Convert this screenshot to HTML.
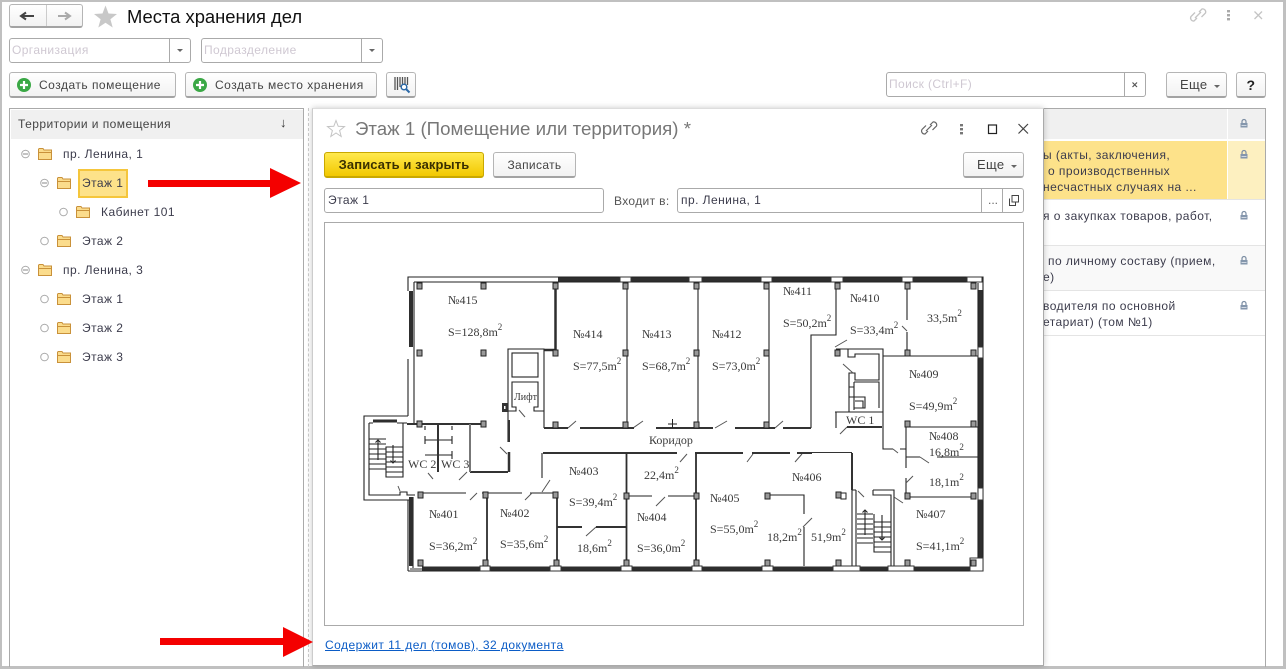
<!DOCTYPE html>
<html><head><meta charset="utf-8"><style>
html,body{margin:0;padding:0;background:#fff}
body{width:1286px;height:669px;position:relative;overflow:hidden;font:12px "Liberation Sans",Arial,sans-serif;color:#333}
.a{position:absolute;box-sizing:border-box}
.t{position:absolute;white-space:nowrap;line-height:16px}
.btn{position:absolute;box-sizing:border-box;background:linear-gradient(#fff,#f2f2f2);border:1px solid #b5b5b5;border-bottom:2px solid #a3a3a3;border-radius:3px;text-align:center;line-height:24px;color:#444;font-size:12px;letter-spacing:.35px}
.btn.w{letter-spacing:.5px}
.btn.m{font-size:13px;letter-spacing:.3px}
.fld{position:absolute;box-sizing:border-box;background:#fff;border:1px solid #aaa;border-radius:3px}
.v{position:absolute;top:0;bottom:0;width:1px;background:#aaa}
.ph{position:absolute;color:#cfc8d2;font-size:12px;line-height:22px;left:2px;letter-spacing:.4px}
.tri{position:absolute;width:0;height:0;border-left:3px solid transparent;border-right:3px solid transparent;border-top:3px solid #666}
.row{letter-spacing:.45px;color:#3c3c4c}
svg{position:absolute;left:0;top:0}
</style></head><body>
<!-- page frame -->
<div class="a" style="left:0;top:0;width:1286px;height:669px;border:solid #c0c0c0;border-width:2px 3px 3px 2px"></div>

<!-- nav buttons -->
<div class="btn" style="left:9px;top:4px;width:74px;height:24px"></div>
<div class="a" style="left:46px;top:5px;width:1px;height:21px;background:#ccc"></div>

<div class="t" style="left:127px;top:7px;font-size:18.4px;line-height:20px;color:#111">Места хранения дел</div>

<div class="fld" style="left:9px;top:38px;width:182px;height:25px"><div class="ph">Организация</div><div class="v" style="left:159px"></div><div class="tri" style="left:167px;top:10px"></div></div>
<div class="fld" style="left:201px;top:38px;width:182px;height:25px"><div class="ph">Подразделение</div><div class="v" style="left:159px"></div><div class="tri" style="left:167px;top:10px"></div></div>

<div class="btn w" style="left:9px;top:72px;width:167px;height:26px;text-align:left;padding-left:29px">Создать помещение</div>
<div class="btn w" style="left:185px;top:72px;width:192px;height:26px;text-align:left;padding-left:29px">Создать место хранения</div>
<div class="btn" style="left:386px;top:72px;width:30px;height:26px"></div>

<div class="fld" style="left:886px;top:72px;width:260px;height:25px"><div class="ph">Поиск (Ctrl+F)</div><div class="v" style="left:237px"></div></div>
<div class="btn m" style="left:1166px;top:72px;width:61px;height:26px;text-align:left;padding-left:13px">Еще</div><div class="tri" style="left:1214px;top:85px"></div>
<div class="btn" style="left:1236px;top:72px;width:30px;height:26px;font-weight:bold;font-size:14px;color:#222">?</div>

<!-- left panel -->
<div class="a" style="left:9px;top:108px;width:295px;height:559px;border:1px solid #aaa;border-bottom:0"></div>
<div class="a" style="left:11px;top:110px;width:292px;height:29px;background:#f0f0f0"></div>
<div class="t row" style="left:18px;top:116px;color:#444">Территории и помещения</div>
<div class="t" style="left:280px;top:115px;font-size:13px;color:#333">↓</div>

<div class="a" style="left:78px;top:169px;width:50px;height:29px;background:#fde28a;border:2px solid #f5c63c"></div>
<div class="t row" style="left:63px;top:146px">пр. Ленина, 1</div>
<div class="t row" style="left:82px;top:175px">Этаж 1</div>
<div class="t row" style="left:101px;top:204px">Кабинет 101</div>
<div class="t row" style="left:82px;top:233px">Этаж 2</div>
<div class="t row" style="left:63px;top:262px">пр. Ленина, 3</div>
<div class="t row" style="left:82px;top:291px">Этаж 1</div>
<div class="t row" style="left:82px;top:320px">Этаж 2</div>
<div class="t row" style="left:82px;top:349px">Этаж 3</div>

<!-- separator -->
<div class="a" style="left:308px;top:108px;width:0;height:559px;border-left:1px dashed #ccc"></div>

<!-- right table -->
<div class="a" style="left:1030px;top:108px;width:236px;height:559px;border:1px solid #aaa;border-left:0;border-bottom:0"></div>
<div class="a" style="left:1030px;top:109px;width:197px;height:30px;background:#f0f0f0"></div>
<div class="a" style="left:1228px;top:109px;width:37px;height:30px;background:#f0f0f0"></div>
<div class="a" style="left:1030px;top:141px;width:197px;height:58px;background:#fde28a"></div>
<div class="a" style="left:1228px;top:141px;width:37px;height:58px;background:#fdf0c0"></div>
<div class="a" style="left:1030px;top:245px;width:235px;height:1px;background:#e4e4e4"></div>
<div class="a" style="left:1030px;top:246px;width:235px;height:44px;background:#f9f9f9"></div>
<div class="a" style="left:1030px;top:290px;width:235px;height:1px;background:#e4e4e4"></div>
<div class="a" style="left:1030px;top:335px;width:235px;height:1px;background:#e4e4e4"></div>
<div class="a" style="left:1030px;top:199px;width:235px;height:1px;background:#e4e4e4"></div>
<div class="t row" style="left:1043px;top:147px">ы (акты, заключения,</div>
<div class="t row" style="left:1048px;top:163px">о производственных</div>
<div class="t row" style="left:1043px;top:179px">несчастных случаях на ...</div>
<div class="t row" style="left:1043px;top:208px">я о закупках товаров, работ,</div>
<div class="t row" style="left:1048px;top:253px">по личному составу (прием,</div>
<div class="t row" style="left:1043px;top:269px">е)</div>
<div class="t row" style="left:1043px;top:298px">водителя по основной</div>
<div class="t row" style="left:1043px;top:314px">етариат) (том №1)</div>

<!-- dialog -->
<div class="a" style="left:312px;top:108px;width:732px;height:558px;background:#fff;border:1px solid #aaa;border-top-color:#ddd;border-left-color:#ccc;box-shadow:0 0 6px rgba(0,0,0,.22)"></div>
<div class="t" style="left:355px;top:118px;font-size:18.7px;line-height:22px;color:#777">Этаж 1 (Помещение или территория) *</div>
<div class="btn" style="left:324px;top:152px;width:160px;height:26px;background:linear-gradient(#ffe94d,#f2c800);border-color:#c9a800;color:#3a3000;font-weight:bold;font-size:13px;letter-spacing:.1px">Записать и закрыть</div>
<div class="btn" style="left:493px;top:152px;width:83px;height:26px">Записать</div>
<div class="btn m" style="left:963px;top:152px;width:61px;height:26px;text-align:left;padding-left:13px">Еще</div><div class="tri" style="left:1011px;top:165px"></div>
<div class="fld" style="left:324px;top:188px;width:280px;height:25px"><div class="t row" style="left:3px;top:3px">Этаж 1</div></div>
<div class="t" style="left:614px;top:193px;color:#555;letter-spacing:.35px">Входит в:</div>
<div class="fld" style="left:677px;top:188px;width:347px;height:25px"><div class="t row" style="left:3px;top:3px">пр. Ленина, 1</div><div class="v" style="left:303px"></div><div class="v" style="left:324px"></div><div class="t" style="left:310px;top:3px;color:#666">...</div></div>
<div class="a" style="left:324px;top:222px;width:700px;height:404px;border:1px solid #aaa"></div>
<div class="t" style="left:325px;top:637px;color:#0b5cc6;text-decoration:underline;letter-spacing:.46px">Содержит 11 дел (томов), 32 документа</div>

<svg width="1286" height="669" viewBox="0 0 1286 669" xmlns="http://www.w3.org/2000/svg">
<defs>
<symbol id="fo" viewBox="0 0 14 12" overflow="visible"><path d="M.5 2.5V1.2L1.2.5H5L6 2H13.5V11.5H.5Z" fill="#fbdc8c" stroke="#c9913a"/><path d="M.5 4.5H13.5" stroke="#c9913a"/></symbol>
<symbol id="lk" overflow="visible"><path d="M2 4V2.5A2 2 0 0 1 6 2.5V4" fill="none" stroke="#7a8ca2" stroke-width="1.2"/><rect x=".5" y="4" width="7" height="4.500" fill="#8496ac"/><rect x="1.500" y="6" width="5" height="1" fill="#d0d8e2"/></symbol>
</defs>

<!-- nav arrows -->
<path d="M21 16H34M26 12.500L21 16L26 19.500" fill="none" stroke="#444" stroke-width="2"/>
<path d="M58 16H70M65 12.500L70 16L65 19.500" fill="none" stroke="#aaa" stroke-width="2"/>
<!-- big star -->
<path d="M105.500 5.500L108.500 13.500L117 14L110.400 19.300L112.700 27.500L105.500 22.800L98.300 27.500L100.600 19.300L94 14L102.500 13.500Z" fill="#c8c8c8"/>
<!-- plus icons -->
<circle cx="24" cy="85" r="7" fill="#3aa845"/><path d="M24 81V89M20 85H28" stroke="#fff" stroke-width="2.200"/>
<circle cx="200" cy="85" r="7" fill="#3aa845"/><path d="M200 81V89M196 85H204" stroke="#fff" stroke-width="2.200"/>
<!-- barcode -->
<path d="M395 77V90M397.500 77V90M400 77V87M402.500 77V85M405 77V85M407.500 77V85" stroke="#555" stroke-width="1.300"/>
<circle cx="404" cy="87" r="2.800" fill="#fff" stroke="#2d6aa8" stroke-width="1.500"/><path d="M406 89L409.500 92.500" stroke="#2d6aa8" stroke-width="2"/>
<!-- clear x in search -->
<path d="M1132.500 82.500L1137 87M1137 82.500L1132.500 87" stroke="#555" stroke-width="1.200"/>
<!-- top right icons -->
<g fill="none" stroke="#c4c4c4" stroke-width="1.300"><path d="M1199 12L1202 9A3 3 0 0 1 1205.500 13L1201.500 17M1197 18L1194 21A3 3 0 0 1 1191 16.500L1195 12.500"/><path d="M1195 18L1201 12"/><path d="M1254.500 11.500L1262 19M1262 11.500L1254.500 19"/></g>
<g fill="#aaa"><rect x="1227" y="10" width="3" height="2.400"/><rect x="1227" y="14" width="3" height="2.400"/><rect x="1227" y="18" width="3" height="2.400"/></g>
<!-- tree nodes -->
<g fill="#fff" stroke="#aaa">
<circle cx="25.500" cy="154" r="3.800"/><circle cx="44.500" cy="183" r="3.800"/><circle cx="63.500" cy="212" r="3.800"/><circle cx="44.500" cy="241" r="3.800"/><circle cx="25.500" cy="270" r="3.800"/><circle cx="44.500" cy="299" r="3.800"/><circle cx="44.500" cy="328" r="3.800"/><circle cx="44.500" cy="357" r="3.800"/>
</g>
<path d="M23 154H28M42 183H47M23 270H28" stroke="#888"/>
<use href="#fo" x="38" y="148" width="14" height="12"/><use href="#fo" x="57" y="177" width="14" height="12"/><use href="#fo" x="76" y="206" width="14" height="12"/><use href="#fo" x="57" y="235" width="14" height="12"/><use href="#fo" x="38" y="264" width="14" height="12"/><use href="#fo" x="57" y="293" width="14" height="12"/><use href="#fo" x="57" y="322" width="14" height="12"/><use href="#fo" x="57" y="351" width="14" height="12"/>
<!-- locks -->
<use href="#lk" x="1240" y="119"/><use href="#lk" x="1240" y="150"/><use href="#lk" x="1240" y="211"/><use href="#lk" x="1240" y="256"/><use href="#lk" x="1240" y="301"/>
<!-- dialog icons -->
<path d="M336 120.500L338.200 126.300L344.500 126.600L339.600 130.500L341.200 136.500L336 133L330.800 136.500L332.400 130.500L327.500 126.600L333.800 126.300Z" fill="#fff" stroke="#c4c4c4"/>
<g fill="none" stroke="#666" stroke-width="1.200"><path d="M930 125L933 122A3 3 0 0 1 936.500 126L932.500 130M928 131L925 134A3 3 0 0 1 922 129.500L926 125.500"/><path d="M926 131L932 125"/></g>
<g fill="#777"><rect x="960" y="124" width="3" height="2.400"/><rect x="960" y="128" width="3" height="2.400"/><rect x="960" y="132" width="3" height="2.400"/></g>
<rect x="988.500" y="125" width="8" height="8.500" fill="none" stroke="#222" stroke-width="1.200"/>
<path d="M1018.500 124L1028 133.500M1028 124L1018.500 133.500" stroke="#444" stroke-width="1.200"/>
<path d="M1012 195.500H1018.500V202H1012ZM1009.500 198.500V205.500H1015.500V202" fill="none" stroke="#444"/>

<!-- FLOOR PLAN -->
<g fill="none" stroke="#222" stroke-width="1.100">
<!-- outer walls -->
<path d="M408 291V277H983V291"/>
<path d="M414 282H978"/>
<path d="M414 282V424M408 359V416"/>
<path d="M978 283V566M983 291V558"/>
<path d="M408 571H983V558"/>
<path d="M408 500V571M413 497V571"/>
<!-- partitions -->
<path d="M627 282V428M698 282V428M769 282V428M836 282V335H811V428M907 282V320M907 332V356M883 356H978"/>
<!-- left stair box -->
<path d="M408 416H364V500H413M369 423V495H400V492H407V495H415M369 423H373M397 423H407"/>
<path d="M403 423V477H386V447H403M369 439H386M369 444H386M369 449H386M369 454H386M369 459H386M369 464H386M369 469H386M386 452H403M386 457H403M386 462H403M386 467H403M386 472H403"/>
<!-- lift -->
<path d="M508 442V349H544V428"/>
<rect x="512" y="353" width="26" height="24"/>
<path d="M508 411H516V407H512V382H538V407H534V411H544"/>
<!-- right core -->
<path d="M836 349H883V449H893M848 349V357H855V354H879V380H855V373H849V412M854 382H879V408M854 382V410M849 387H854M849 397H854M854 397H865V408H854M855 401H863V408M835 412H883M836 412V428"/>
<path d="M906 427V468M906 478V498M906 427H978M906 457H920M937 457H978M906 497H975M900 449H906"/>
<!-- WC -->
<path d="M425 440H452M425 436V444M452 436V444M425 455H452M452 451V459M425 426V430M452 426V430"/>
<path d="M420 493H466M482 493H522M530 493H555"/>
<path d="M542 453V478"/>
<path d="M626 496H652M668 496H695"/>
<path d="M766 495H804V514M804 527V566"/>
<!-- stair right -->
<path d="M852 490V566M856 490V566M852 490H856M873 490H894V566M873 490V495H891V566"/>
<path d="M857 514H873M857 519H873M857 524H873M857 529H873M857 534H873M857 538H873M857 543H873M874 514V552H891M874 522H891M874 527H891M874 532H891M874 537H891M874 542H891M874 547H891"/>
<path d="M378 440V460M375.500 442.500L378 440L380.500 442.500M393 445V463M390.500 460.500L393 463L395.500 460.500M865 510V535M862.500 512.500L865 510L867.500 512.500M882 515V540M879.500 537.500L882 540L884.500 537.500"/>
</g>
<g stroke="#555" stroke-width="1" fill="none">
<!-- door swings -->
<path d="M428 473L433 479M459 480L467 472M470 500L477 493M525 500L532 493M542 492L550 480M500 447L507 454M586 536L596 527M656 506L665 497M568 428L576 421M633 428L643 421M715 428L727 421M775 428L783 421M680 462L687 454M747 462L753 454M795 462L802 454M803 527L812 518M893 449L898 453M920 457L929 463M906 483L913 476M858 491L864 497M894 497L903 503M840 434L847 427M835 347L847 340M843 364L853 373M902 326L907 331M400 491L398 486M519 410L525 417"/>
</g>
<g stroke="#333" fill="none" stroke-width="2">
<path d="M544 428H568M580 428H634M656 428H713M735 428H775M783 428H811"/>
<path d="M543 453H677M695 453H743M752 453H790M797 453H812M852 453V490"/>
<path d="M509 420V442"/>
<path d="M509 452V472" stroke-width="2.500"/>
<path d="M407 424H484"/>
<path d="M557 527H582M596 527H626"/>
<path d="M847 427H882"/>
<path d="M470 472H508"/>
<path d="M438 424V472"/>
<path d="M470 424V472" stroke="#777"/>
</g>
<path d="M812 452.500H852" stroke="#333" fill="none" stroke-width="1"/>
<g stroke="#2e2e2e" fill="none">
<path d="M558 279.500H967" stroke-width="4"/>
<path d="M411 291V347" stroke-width="4"/>
<path d="M373 421H397" stroke-width="3"/>
<path d="M980.500 290V488M980.500 500V558" stroke-width="4"/>
<path d="M422 568.500H970" stroke-width="4"/>
<path d="M411 497V566" stroke-width="4"/>
<path d="M555.500 282V350M544 350H556" stroke-width="2.500"/>
<path d="M626.500 453V566M696 453V566M487 493V566M557 493V566" stroke-width="1.800"/>
</g>
<path d="M410 569.500H422" stroke="#999" stroke-width="3"/>
<!-- window gaps -->
<g fill="#fff" stroke="#333" stroke-width="1">
<rect x="620" y="277" width="11" height="5"/><rect x="689" y="277" width="13" height="5"/><rect x="761" y="277" width="11" height="5"/><rect x="831" y="277" width="12" height="5"/><rect x="902" y="277" width="11" height="5"/><rect x="967" y="277" width="15" height="5"/>
<rect x="978" y="347" width="5" height="11"/><rect x="978" y="488" width="5" height="12"/>
<rect x="480" y="566" width="10" height="5"/><rect x="550" y="566" width="11" height="5"/><rect x="621" y="566" width="11" height="5"/><rect x="692" y="566" width="10" height="5"/><rect x="762" y="566" width="11" height="5"/><rect x="833" y="566" width="27" height="5"/><rect x="888" y="566" width="26" height="5"/><rect x="970" y="558" width="13" height="13"/>
</g>
<!-- columns -->
<g fill="#999" stroke="#222" stroke-width="1">
<rect x="417" y="283" width="5" height="6"/><rect x="481" y="283" width="5" height="6"/><rect x="553" y="283" width="5" height="6"/><rect x="623" y="283" width="5" height="6"/><rect x="694" y="283" width="5" height="6"/><rect x="764" y="283" width="5" height="6"/><rect x="835" y="283" width="5" height="6"/><rect x="905" y="283" width="5" height="6"/><rect x="971" y="283" width="5" height="6"/>
<rect x="417" y="350" width="5" height="6"/><rect x="481" y="350" width="5" height="6"/><rect x="553" y="350" width="5" height="6"/><rect x="623" y="350" width="5" height="6"/><rect x="694" y="350" width="5" height="6"/><rect x="764" y="350" width="5" height="6"/><rect x="835" y="350" width="5" height="6"/><rect x="905" y="350" width="5" height="6"/><rect x="971" y="350" width="5" height="6"/>
<rect x="417" y="421" width="5" height="6"/><rect x="481" y="421" width="5" height="6"/><rect x="553" y="422" width="5" height="6"/><rect x="623" y="422" width="5" height="6"/><rect x="694" y="422" width="5" height="6"/><rect x="764" y="422" width="5" height="6"/><rect x="905" y="421" width="5" height="6"/><rect x="971" y="421" width="5" height="6"/>
<rect x="418" y="492" width="5" height="6"/><rect x="483" y="492" width="5" height="6"/><rect x="553" y="492" width="5" height="6"/><rect x="624" y="493" width="5" height="6"/><rect x="694" y="493" width="5" height="6"/><rect x="765" y="493" width="5" height="6"/><rect x="836" y="492" width="5" height="6"/><rect x="905" y="493" width="5" height="6"/><rect x="971" y="493" width="5" height="6"/>
<rect x="418" y="560" width="5" height="6"/><rect x="483" y="560" width="5" height="6"/><rect x="554" y="560" width="5" height="6"/><rect x="624" y="560" width="5" height="6"/><rect x="694" y="560" width="5" height="6"/><rect x="765" y="560" width="5" height="6"/><rect x="836" y="560" width="5" height="6"/><rect x="905" y="560" width="5" height="6"/><rect x="971" y="560" width="5" height="6"/>
</g>
<rect x="841" y="493" width="5" height="6" fill="#fff" stroke="#222"/>
<rect x="502" y="403" width="6" height="9" fill="#333"/><rect x="504" y="406" width="1.500" height="3" fill="#fff"/>
<path d="M668 424H677M672.500 419V428" stroke="#222" stroke-width="1"/>
<!-- labels -->
<g font-family="'Liberation Serif',serif" font-size="12" fill="#3a3a3a">
<text x="448" y="304">№415</text><text x="448" y="336">S=128,8m<tspan font-size="9" dy="-6">2</tspan></text>
<text x="573" y="338">№414</text><text x="573" y="370">S=77,5m<tspan font-size="9" dy="-6">2</tspan></text>
<text x="642" y="338">№413</text><text x="642" y="370">S=68,7m<tspan font-size="9" dy="-6">2</tspan></text>
<text x="712" y="338">№412</text><text x="712" y="370">S=73,0m<tspan font-size="9" dy="-6">2</tspan></text>
<text x="783" y="295">№411</text><text x="783" y="327">S=50,2m<tspan font-size="9" dy="-6">2</tspan></text>
<text x="850" y="302">№410</text><text x="850" y="334">S=33,4m<tspan font-size="9" dy="-6">2</tspan></text>
<text x="927" y="322">33,5m<tspan font-size="9" dy="-6">2</tspan></text>
<text x="909" y="378">№409</text><text x="909" y="410">S=49,9m<tspan font-size="9" dy="-6">2</tspan></text>
<text x="514" y="400" font-size="10">Лифт</text>
<text x="846" y="424">WC 1</text>
<text x="649" y="444">Коридор</text>
<text x="408" y="468">WC 2</text><text x="441" y="468">WC 3</text>
<text x="569" y="475">№403</text><text x="569" y="506">S=39,4m<tspan font-size="9" dy="-6">2</tspan></text>
<text x="644" y="479">22,4m<tspan font-size="9" dy="-6">2</tspan></text>
<text x="429" y="518">№401</text><text x="429" y="550">S=36,2m<tspan font-size="9" dy="-6">2</tspan></text>
<text x="500" y="517">№402</text><text x="500" y="548">S=35,6m<tspan font-size="9" dy="-6">2</tspan></text>
<text x="577" y="552">18,6m<tspan font-size="9" dy="-6">2</tspan></text>
<text x="637" y="521">№404</text><text x="637" y="552">S=36,0m<tspan font-size="9" dy="-6">2</tspan></text>
<text x="710" y="502">№405</text><text x="710" y="533">S=55,0m<tspan font-size="9" dy="-6">2</tspan></text>
<text x="792" y="481">№406</text>
<text x="767" y="541">18,2m<tspan font-size="9" dy="-6">2</tspan></text><text x="811" y="541">51,9m<tspan font-size="9" dy="-6">2</tspan></text>
<text x="929" y="440">№408</text><text x="929" y="456">16,8m<tspan font-size="9" dy="-6">2</tspan></text>
<text x="929" y="486">18,1m<tspan font-size="9" dy="-6">2</tspan></text>
<text x="916" y="518">№407</text><text x="916" y="550">S=41,1m<tspan font-size="9" dy="-6">2</tspan></text>
</g>
<!-- red arrows -->
<path d="M148 180H270V168L301 183L270 198V187H148Z" fill="#f40000"/>
<path d="M160 638H283V627L313 642L283 657V645H160Z" fill="#f40000"/>
</svg>
</body></html>
